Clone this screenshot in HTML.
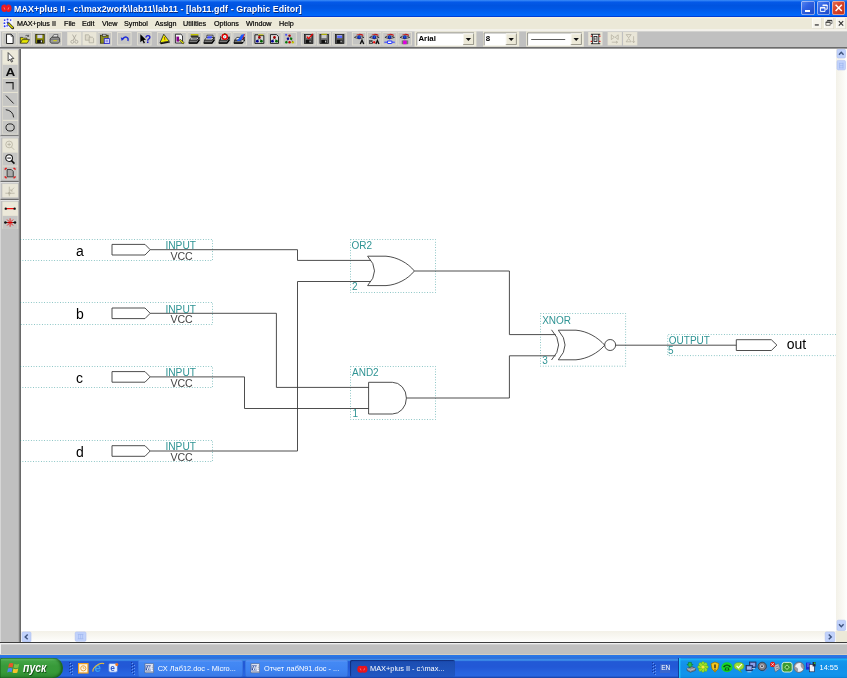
<!DOCTYPE html>
<html lang="en">
<head>
<meta charset="utf-8">
<title>MAX+plus II - Graphic Editor</title>
<style>
html,body{margin:0;padding:0;}
body{width:847px;height:678px;overflow:hidden;position:relative;background:#fff;font-family:"Liberation Sans",sans-serif;}
.abs{position:absolute;}
#title{left:0;top:0;width:847px;height:17px;background:linear-gradient(to bottom,#3f8ff8 0%,#1a6ef0 7%,#0459e8 14%,#0054e0 32%,#0057e5 50%,#0062f3 75%,#0068fb 91%,#0046dc 95.5%,#002fc4 100%);}
#title .txt{left:14px;top:3px;color:#fff;font-weight:bold;font-size:8.85px;line-height:12px;white-space:nowrap;text-shadow:0.6px 0.6px 0 #0a2a80;letter-spacing:0.08px;}
#menu{left:0;top:17px;width:847px;height:13px;background:linear-gradient(to bottom,#f7f1df 0,#f7f1df 1px,#ece9d8 1.8px,#ece9d8 11.6px,#f3f1e8 12.4px,#f4f3ee 13px);}
#menu span{position:absolute;top:1.5px;font-size:7.2px;line-height:10px;color:#000;white-space:nowrap;-webkit-text-stroke:0.2px #000;}
#tool{left:0;top:30px;width:847px;height:19px;background:#c0c0c0;}
#left{left:0;top:49px;width:21px;height:593px;background:#c0c0c0;}
#canvas{left:21px;top:49px;width:815px;height:582px;background:#fff;}
#vscroll{left:836px;top:49px;width:11px;height:582px;background:linear-gradient(to right,#f3f1e8,#fefefc);}
#hscroll{left:21px;top:631px;width:815px;height:11px;background:linear-gradient(to bottom,#f3f1e8,#fefefc);}
#corner{left:836px;top:631px;width:11px;height:11px;background:#ece9d8;}
#status{left:0;top:642px;width:847px;height:13px;background:#c0c0c0;}
#task{left:0;top:655px;width:847px;height:23px;background:linear-gradient(to bottom,#2a78e6 0px,#2a74e4 2px,#2f6cd6 3.2px,#3f8ee8 4.6px,#3a88e6 5.4px,#2259d6 6.6px,#2258d6 12px,#2764e0 18px,#2866e2 21px,#1f4fbe 22px,#193fa0 23px);}
.tb{position:absolute;top:2px;width:14.4px;height:13.4px;background:#c5c5c3;box-shadow:inset 0 0 0 0.8px #e6e3d5;}
.tb.dis{background:#e9e6d8;}
.combo{position:absolute;top:2.6px;height:12.4px;background:#fff;box-shadow:0 0 0 0.6px #8a98b0;}
.ctxt{position:absolute;left:2.2px;top:1.2px;font-size:8px;line-height:10px;font-weight:bold;color:#000;}
.cbtn{position:absolute;right:0.4px;top:0.6px;width:10.6px;height:11.2px;background:#ece9d8;box-shadow:inset 0.6px 0.6px 0 #fff,inset -0.7px -0.7px 0 #8a8878;}
.lb{position:absolute;left:3px;width:15px;height:14px;background:#c6c6c2;box-shadow:inset 0.5px 0.5px 0 #e8e5d8,inset -0.5px -0.5px 0 #dcd8c8;}
.sbtn{position:absolute;background:#c1d2fb;border-radius:1.5px;box-shadow:inset 0 0 0 0.5px #b0c4f4;}
svg{position:absolute;overflow:visible;}
</style>
</head>
<body>
<div id="root" style="position:absolute;left:0;top:0;width:847px;height:678px;will-change:transform">
<!-- TITLE BAR -->
<div id="title" class="abs">
  <div class="abs txt">MAX+plus II - c:\max2work\lab11\lab11 - [lab11.gdf - Graphic Editor]</div>
</div>
<!-- MENU BAR -->
<div id="menu" class="abs">
  <span style="left:17px">MAX+plus II</span>
  <span style="left:64px">File</span>
  <span style="left:82px">Edit</span>
  <span style="left:102px">View</span>
  <span style="left:124px">Symbol</span>
  <span style="left:155px">Assign</span>
  <span style="left:183px">Utilities</span>
  <span style="left:214px">Options</span>
  <span style="left:246px">Window</span>
  <span style="left:279px">Help</span>
</div>
<!-- TOOLBAR -->
<div id="tool" class="abs">
<div class="abs" style="left:0;top:0;width:847px;height:1px;background:#f4f3ee"></div>
<div class="abs" style="left:0;top:17px;width:847px;height:1px;background:#6c6c6c"></div>
<div class="abs" style="left:0;top:18px;width:847px;height:1px;background:#9c9c9c"></div>
<svg style="left:0;top:0" width="847" height="19" viewBox="0 30 847 19">
<rect x="0" y="30.9" width="847" height="0.6" fill="#e4e3de"/>
<rect x="0" y="31.3" width="0.9" height="15.7" fill="#e6e6e6"/>
<rect x="414.6" y="31.2" width="61.8" height="15.4" fill="#ece9d8"/>
<rect x="483.0" y="31.2" width="36.2" height="15.4" fill="#ece9d8"/>
<rect x="526.2" y="31.2" width="57.6" height="15.4" fill="#ece9d8"/>
<rect x="2.4" y="32.0" width="14.3" height="13.4" fill="#e6e3d5"/>
<rect x="3.2" y="32.8" width="12.7" height="11.8" fill="#c5c5c3"/>
<g transform="translate(2.5,32.2) scale(1.01,1.0)"><path d="M4,2 H8.5 L10.5,4 V11.3 H4 Z" fill="#fff" stroke="#111" stroke-width=".9"/><path d="M8.5,2 V4 H10.5" fill="none" stroke="#111" stroke-width=".6"/></g>
<rect x="17.6" y="32.0" width="14.3" height="13.4" fill="#e6e3d5"/>
<rect x="18.4" y="32.8" width="12.7" height="11.8" fill="#c5c5c3"/>
<g transform="translate(17.7,32.2) scale(1.01,1.0)"><path d="M2.6,11 V5.2 H5 L5.8,6 H9.2 V7.4" fill="#d8d800" stroke="#222" stroke-width=".7"/><path d="M2.6,11 L4.6,7.4 H11.6 L9.4,11 Z" fill="#e6e600" stroke="#222" stroke-width=".7"/><path d="M7.6,3.6 Q9.4,2.2 10.6,3.8 M10.8,2.6 V4.2 H9.4" fill="none" stroke="#222" stroke-width=".6"/></g>
<rect x="32.6" y="32.0" width="14.3" height="13.4" fill="#e6e3d5"/>
<rect x="33.4" y="32.8" width="12.7" height="11.8" fill="#c5c5c3"/>
<g transform="translate(32.7,32.2) scale(1.01,1.0)"><rect x="3" y="2.2" width="8.4" height="8.8" fill="#8a8a00" stroke="#1a1a00" stroke-width=".7"/><rect x="4.6" y="2.6" width="5" height="3.4" fill="#d0d0e8"/><rect x="4.4" y="7.6" width="5.4" height="3.2" fill="#111"/><rect x="8" y="8.2" width="1.2" height="2" fill="#ddd"/></g>
<rect x="47.6" y="32.0" width="14.3" height="13.4" fill="#e6e3d5"/>
<rect x="48.4" y="32.8" width="12.7" height="11.8" fill="#c5c5c3"/>
<g transform="translate(47.7,32.2) scale(1.01,1.0)"><path d="M4.6,5 L6,2.4 H10.2 L9.6,5 Z" fill="#e8e8e8" stroke="#333" stroke-width=".6"/><path d="M2.4,6.8 L4,5 H11 L11.8,6.8 V9.6 L10.6,11 H3.6 L2.4,9.6 Z" fill="#9a9a9a" stroke="#222" stroke-width=".7"/><rect x="5.6" y="8" width="3.4" height="1" fill="#d8d800"/><path d="M2.6,7 H11.6" stroke="#444" stroke-width=".5"/></g>
<rect x="67.2" y="32.0" width="14.3" height="13.4" fill="#e6e3d5"/>
<rect x="68.0" y="32.8" width="12.7" height="11.8" fill="#e9e6d8"/>
<g transform="translate(67.3,32.2) scale(1.01,1.0)"><path d="M5.2,2.4 L8.2,8 M8.8,2.4 L5.8,8" stroke="#a8a498" stroke-width=".8" fill="none"/><circle cx="5" cy="9.6" r="1.5" fill="none" stroke="#a8a498" stroke-width=".8"/><circle cx="9" cy="9.6" r="1.5" fill="none" stroke="#a8a498" stroke-width=".8"/></g>
<rect x="82.4" y="32.0" width="14.3" height="13.4" fill="#e6e3d5"/>
<rect x="83.2" y="32.8" width="12.7" height="11.8" fill="#e9e6d8"/>
<g transform="translate(82.5,32.2) scale(1.01,1.0)"><path d="M2.8,2.6 H6 L7.2,3.8 V8 H2.8 Z" fill="#ddd9c9" stroke="#aaa698" stroke-width=".7"/><path d="M6.6,5 H9.8 L11,6.2 V10.6 H6.6 Z" fill="#e4e0d0" stroke="#aaa698" stroke-width=".7"/></g>
<rect x="97.5" y="32.0" width="14.3" height="13.4" fill="#e6e3d5"/>
<rect x="98.3" y="32.8" width="12.7" height="11.8" fill="#c5c5c3"/>
<g transform="translate(97.6,32.2) scale(1.01,1.0)"><rect x="2.8" y="3" width="7.6" height="8" fill="#8a8a20" stroke="#2a2a00" stroke-width=".7"/><rect x="4.8" y="2" width="3.6" height="2" fill="#c8c8c8" stroke="#222" stroke-width=".5"/><rect x="6.6" y="6.4" width="5" height="5" fill="#e8e8ff" stroke="#2222cc" stroke-width=".8"/><path d="M7.8,8 H10.4 M7.8,9.6 H10.4" stroke="#22c" stroke-width=".6"/></g>
<rect x="117.2" y="32.0" width="14.3" height="13.4" fill="#e6e3d5"/>
<rect x="118.0" y="32.8" width="12.7" height="11.8" fill="#c5c5c3"/>
<g transform="translate(117.3,32.2) scale(1.01,1.0)"><path d="M5.4,7.2 Q6.4,4.4 9,4.9 Q11.4,5.6 10.5,8.8" fill="none" stroke="#1a2ad8" stroke-width="1.3"/><path d="M3.4,5.2 L7,6 L4.4,8.9 Z" fill="#1a2ad8"/></g>
<rect x="137.2" y="32.0" width="14.3" height="13.4" fill="#e6e3d5"/>
<rect x="138.0" y="32.8" width="12.7" height="11.8" fill="#c5c5c3"/>
<g transform="translate(137.3,32.2) scale(1.01,1.0)"><path d="M3,2 L3,10 L5,8.2 L6.4,11.2 L7.6,10.6 L6.2,7.8 L8.6,7.6 Z" fill="#000"/><text x="7.4" y="10.6" font-size="10.4" font-weight="bold" font-family="Liberation Sans, sans-serif" fill="#1a1ad0">?</text></g>
<rect x="157.2" y="32.0" width="14.3" height="13.4" fill="#e6e3d5"/>
<rect x="158.0" y="32.8" width="12.7" height="11.8" fill="#c5c5c3"/>
<g transform="translate(157.3,32.2) scale(1.01,1.0)"><path d="M2.6,10.6 L11.8,9 L12.6,10.4 L3.6,12 Z" fill="#111"/><path d="M6.4,2 L11.8,9 L2.6,10.6 Z" fill="#f0f000" stroke="#222" stroke-width=".8"/><path d="M7,4.8 L7.6,8 M7.8,9 V9.4" stroke="#a04000" stroke-width=".9"/></g>
<rect x="172.3" y="32.0" width="14.3" height="13.4" fill="#e6e3d5"/>
<rect x="173.1" y="32.8" width="12.7" height="11.8" fill="#c5c5c3"/>
<g transform="translate(172.4,32.2) scale(1.01,1.0)"><path d="M3,2 H8.4 L10,3.6 V10.8 H3 Z" fill="#f4f4f4" stroke="#111" stroke-width=".8"/><rect x="4" y="4.4" width="2.6" height="5" fill="#8a008a"/><path d="M7.6,7 L11.6,10.4 L10.6,11.8 L6.8,8.4 Z" fill="#e0e000" stroke="#222" stroke-width=".6"/></g>
<rect x="187.4" y="32.0" width="14.3" height="13.4" fill="#e6e3d5"/>
<rect x="188.2" y="32.8" width="12.7" height="11.8" fill="#c5c5c3"/>
<g transform="translate(187.5,32.2) scale(1.01,1.0)"><path d="M2,8 L4.2,5.2 H11.6 L9.6,8 Z" fill="#ececec" stroke="#111" stroke-width=".7"/><path d="M2,8 H9.6 L11.6,5.2 V7.6 L9.4,10.8 H1.4 Z" fill="#7a7a7a" stroke="#111" stroke-width=".7"/><path d="M1.2,11 H9.4 L11.8,7.6" stroke="#000" stroke-width="1.2" fill="none"/><rect x="3.2" y="1.8" width="7.6" height="1.6" fill="#c4c400"/><rect x="3.2" y="3.4" width="7.6" height="1.2" fill="#111"/><path d="M4.6,6.6 H9.4" stroke="#555" stroke-width="1"/></g>
<rect x="202.4" y="32.0" width="14.3" height="13.4" fill="#e6e3d5"/>
<rect x="203.2" y="32.8" width="12.7" height="11.8" fill="#c5c5c3"/>
<g transform="translate(202.5,32.2) scale(1.01,1.0)"><path d="M2,8 L4.2,5.2 H11.6 L9.6,8 Z" fill="#ececec" stroke="#111" stroke-width=".7"/><path d="M2,8 H9.6 L11.6,5.2 V7.6 L9.4,10.8 H1.4 Z" fill="#7a7a7a" stroke="#111" stroke-width=".7"/><path d="M1.2,11 H9.4 L11.8,7.6" stroke="#000" stroke-width="1.2" fill="none"/><path d="M4.4,3 H10.4 V5.4 H4.4 Z" fill="#e8e8f4" stroke="#111" stroke-width=".7"/><path d="M5.2,4 H9.6 L8.8,6.4 H4.4 Z" fill="#3a4aff"/></g>
<rect x="217.4" y="32.0" width="14.3" height="13.4" fill="#e6e3d5"/>
<rect x="218.2" y="32.8" width="12.7" height="11.8" fill="#c5c5c3"/>
<g transform="translate(217.5,32.2) scale(1.01,1.0)"><path d="M2,8 L4.2,5.2 H11.6 L9.6,8 Z" fill="#ececec" stroke="#111" stroke-width=".7"/><path d="M2,8 H9.6 L11.6,5.2 V7.6 L9.4,10.8 H1.4 Z" fill="#7a7a7a" stroke="#111" stroke-width=".7"/><path d="M1.2,11 H9.4 L11.8,7.6" stroke="#000" stroke-width="1.2" fill="none"/><path d="M3,4 V8 M11.4,4 V7" stroke="#111" stroke-width=".7"/><circle cx="7.2" cy="4.6" r="2.5" fill="#fff" stroke="#e00000" stroke-width="1.5"/><path d="M6.4,1.6 H8" stroke="#0a6a0a" stroke-width=".9"/><circle cx="7.2" cy="4.6" r=".6" fill="#2a9aa0"/></g>
<rect x="232.5" y="32.0" width="14.3" height="13.4" fill="#e6e3d5"/>
<rect x="233.3" y="32.8" width="12.7" height="11.8" fill="#c5c5c3"/>
<g transform="translate(232.6,32.2) scale(1.01,1.0)"><path d="M2,8 L4.2,5.2 H11.6 L9.6,8 Z" fill="#ececec" stroke="#111" stroke-width=".7"/><path d="M2,8 H9.6 L11.6,5.2 V7.6 L9.4,10.8 H1.4 Z" fill="#7a7a7a" stroke="#111" stroke-width=".7"/><path d="M1.2,11 H9.4 L11.8,7.6" stroke="#000" stroke-width="1.2" fill="none"/><path d="M4.2,8.6 L7,5.4 L8.6,2.6 L11.8,1.8 L10,6.2 Q8,9.4 4.2,8.6 Z" fill="#1a5aff"/><path d="M11.9,2 L9.6,7.4" stroke="#c81030" stroke-width=".8"/><ellipse cx="9.8" cy="8.8" rx="1.7" ry="1" fill="#fff" stroke="#111" stroke-width=".5"/></g>
<rect x="252.2" y="32.0" width="14.3" height="13.4" fill="#e6e3d5"/>
<rect x="253.0" y="32.8" width="12.7" height="11.8" fill="#c5c5c3"/>
<g transform="translate(252.3,32.2) scale(1.01,1.0)"><path d="M2.6,2.6 H5.6 L6.4,3.4 H11.4 V11.2 H2.6 Z" fill="#d4d4d4" stroke="#111" stroke-width=".9"/><path d="M6,2.6 H11" stroke="#c8c800" stroke-width=".9"/><circle cx="7" cy="5.2" r="1.35" fill="#a80000"/><circle cx="5" cy="9" r="1.35" fill="#000098"/><circle cx="9" cy="9" r="1.35" fill="#006800"/><path d="M7,6 L5,8.4 M7,6 L9,8.4" stroke="#222" stroke-width=".5"/></g>
<rect x="267.3" y="32.0" width="14.3" height="13.4" fill="#e6e3d5"/>
<rect x="268.1" y="32.8" width="12.7" height="11.8" fill="#c5c5c3"/>
<g transform="translate(267.4,32.2) scale(1.01,1.0)"><path d="M3,2.4 H9 L11,4.4 V11.2 H3 Z" fill="#dcdcdc" stroke="#111" stroke-width=".9"/><circle cx="7" cy="5.2" r="1.35" fill="#a80000"/><circle cx="5" cy="9" r="1.35" fill="#000098"/><circle cx="9" cy="9" r="1.35" fill="#006800"/><path d="M7,6 L5,8.4 M7,6 L9,8.4" stroke="#222" stroke-width=".5"/></g>
<rect x="282.4" y="32.0" width="14.3" height="13.4" fill="#e6e3d5"/>
<rect x="283.2" y="32.8" width="12.7" height="11.8" fill="#c5c5c3"/>
<g transform="translate(282.5,32.2) scale(1.01,1.0)"><circle cx="7" cy="3.4" r="1.2" fill="#c00000"/><circle cx="5.4" cy="6.6" r="1.2" fill="#0000b0"/><circle cx="8.6" cy="6.6" r="1.2" fill="#008000"/><circle cx="3.8" cy="10" r="1.2" fill="#008000"/><circle cx="7" cy="10" r="1.2" fill="#c00000"/><circle cx="10.2" cy="10" r="1.2" fill="#c8c800"/><path d="M7,3.4 L3.8,10 M7,3.4 L10.2,10" stroke="#333" stroke-width=".4"/><path d="M3.6,1.6 V3.6 M2.6,2.6 H4.6" stroke="#22f" stroke-width=".7"/></g>
<rect x="301.3" y="32.0" width="14.3" height="13.4" fill="#e6e3d5"/>
<rect x="302.1" y="32.8" width="12.7" height="11.8" fill="#c5c5c3"/>
<g transform="translate(301.4,32.2) scale(1.01,1.0)"><rect x="3" y="2.4" width="8.4" height="8.8" fill="#555" stroke="#111" stroke-width=".7"/><rect x="4.6" y="2.8" width="5" height="3.2" fill="#c8c8c8"/><rect x="4.4" y="7.8" width="5.4" height="3.2" fill="#111"/><rect x="8" y="8.4" width="1.2" height="1.8" fill="#ccc"/><path d="M5.4,4.4 L7.2,6.4 L11.2,1.6" fill="none" stroke="#f00000" stroke-width="1.3"/></g>
<rect x="316.8" y="32.0" width="14.3" height="13.4" fill="#e6e3d5"/>
<rect x="317.6" y="32.8" width="12.7" height="11.8" fill="#c5c5c3"/>
<g transform="translate(316.9,32.2) scale(1.01,1.0)"><rect x="3" y="2.4" width="8.4" height="8.8" fill="#6a6a6a" stroke="#111" stroke-width=".7"/><rect x="4.6" y="2.8" width="5" height="3.2" fill="#c8c8c8"/><rect x="4.4" y="7.8" width="5.4" height="3.2" fill="#111"/><rect x="8" y="8.4" width="1.2" height="1.8" fill="#ccc"/><rect x="4.4" y="1.6" width="5.6" height="1" fill="#c8c800"/></g>
<rect x="332.3" y="32.0" width="14.3" height="13.4" fill="#e6e3d5"/>
<rect x="333.1" y="32.8" width="12.7" height="11.8" fill="#c5c5c3"/>
<g transform="translate(332.4,32.2) scale(1.01,1.0)"><rect x="3" y="2.4" width="8.4" height="8.8" fill="#505050" stroke="#111" stroke-width=".7"/><rect x="4.6" y="2.8" width="5" height="3.2" fill="#c8c8c8"/><rect x="4.4" y="7.8" width="5.4" height="3.2" fill="#111"/><rect x="8" y="8.4" width="1.2" height="1.8" fill="#ccc"/><rect x="4.8" y="3.4" width="4.8" height="2.4" fill="#5a6aff"/></g>
<rect x="351.9" y="32.0" width="14.3" height="13.4" fill="#e6e3d5"/>
<rect x="352.7" y="32.8" width="12.7" height="11.8" fill="#c5c5c3"/>
<g transform="translate(352.0,32.2) scale(1.01,1.0)"><path d="M3.6,3 Q7.4,0.2 11.2,2.6 L11,3.8 Q7.4,1.6 3.6,3 Z" fill="#c41414"/><path d="M2.4,5.2 Q7,2 11.8,5.2 Q7,8 2.4,5.2 Z" fill="#dcdcdc" stroke="#111" stroke-width=".7"/><circle cx="7" cy="5" r="1.75" fill="#0a1cae"/><circle cx="7.1" cy="4.9" r=".75" fill="#2a78ff"/><path d="M8.2,11.8 L9.9,8 L11.6,11.8" fill="none" stroke="#111" stroke-width="1.35"/></g>
<rect x="367.1" y="32.0" width="14.3" height="13.4" fill="#e6e3d5"/>
<rect x="367.9" y="32.8" width="12.7" height="11.8" fill="#c5c5c3"/>
<g transform="translate(367.2,32.2) scale(1.01,1.0)"><path d="M3.6,3 Q7.4,0.2 11.2,2.6 L11,3.8 Q7.4,1.6 3.6,3 Z" fill="#c41414"/><path d="M2.4,5.2 Q7,2 11.8,5.2 Q7,8 2.4,5.2 Z" fill="#dcdcdc" stroke="#111" stroke-width=".7"/><circle cx="7" cy="5" r="1.75" fill="#0a1cae"/><circle cx="7.1" cy="4.9" r=".75" fill="#2a78ff"/><text x="1.8" y="12" font-size="5.6" font-weight="bold" font-family="Liberation Sans, sans-serif" fill="#111">B</text><path d="M5.6,10 H8.2 M6.9,8.7 V11.3" stroke="#f00000" stroke-width="1.1"/><path d="M8.6,11.8 L10.1,8.2 L11.6,11.8" fill="none" stroke="#111" stroke-width="1.3"/></g>
<rect x="382.4" y="32.0" width="14.3" height="13.4" fill="#e6e3d5"/>
<rect x="383.2" y="32.8" width="12.7" height="11.8" fill="#c5c5c3"/>
<g transform="translate(382.5,32.2) scale(1.01,1.0)"><path d="M3.6,3 Q7.4,0.2 11.2,2.6 L11,3.8 Q7.4,1.6 3.6,3 Z" fill="#c41414"/><path d="M2.4,5.2 Q7,2 11.8,5.2 Q7,8 2.4,5.2 Z" fill="#dcdcdc" stroke="#111" stroke-width=".7"/><circle cx="7" cy="5" r="1.75" fill="#0a1cae"/><circle cx="7.1" cy="4.9" r=".75" fill="#2a78ff"/><path d="M1.8,10 H12.2" stroke="#3a4aff" stroke-width="1.1"/><rect x="4.8" y="8.7" width="4.6" height="2.6" rx=".9" fill="#fff" stroke="#2a3aff" stroke-width="1"/></g>
<rect x="397.6" y="32.0" width="14.3" height="13.4" fill="#e6e3d5"/>
<rect x="398.4" y="32.8" width="12.7" height="11.8" fill="#c5c5c3"/>
<g transform="translate(397.7,32.2) scale(1.01,1.0)"><path d="M3.6,3 Q7.4,0.2 11.2,2.6 L11,3.8 Q7.4,1.6 3.6,3 Z" fill="#c41414"/><path d="M2.4,5.2 Q7,2 11.8,5.2 Q7,8 2.4,5.2 Z" fill="#dcdcdc" stroke="#111" stroke-width=".7"/><circle cx="7" cy="5" r="1.75" fill="#0a1cae"/><circle cx="7.1" cy="4.9" r=".75" fill="#2a78ff"/><rect x="4" y="8.2" width="6.4" height="3.8" fill="#777"/><rect x="5.4" y="8.4" width="3.4" height="3.6" fill="#e000e0"/></g>
<rect x="588.2" y="32.0" width="14.3" height="13.4" fill="#e6e3d5"/>
<rect x="589.0" y="32.8" width="12.7" height="11.8" fill="#e9e6d8"/>
<g transform="translate(588.3,32.2) scale(1.01,1.0)"><rect x="4" y="2" width="6.4" height="9.6" fill="#f4f4f4" stroke="#111" stroke-width=".8"/><rect x="5.6" y="4.2" width="3" height="5" fill="#ddd" stroke="#111" stroke-width=".8"/><path d="M5.6,6.8 L7,6 V7.6 Z" fill="#111"/><g fill="#e00000"><rect x="2.4" y="3.4" width="1.2" height="1.2"/><rect x="2.4" y="8.6" width="1.2" height="1.2"/><rect x="10.8" y="3.4" width="1.2" height="1.2"/><rect x="10.8" y="8.6" width="1.2" height="1.2"/></g><g fill="#111"><rect x="2.6" y="1.6" width="1" height="1"/><rect x="10.8" y="1.6" width="1" height="1"/><rect x="2.6" y="11" width="1" height="1"/><rect x="10.8" y="11" width="1" height="1"/></g></g>
<rect x="607.6" y="32.0" width="14.3" height="13.4" fill="#e6e3d5"/>
<rect x="608.4" y="32.8" width="12.7" height="11.8" fill="#e9e6d8"/>
<g transform="translate(607.7,32.2) scale(1.01,1.0)"><path d="M3.6,2.6 L6.6,5 L3.6,7.4 Z M10.4,2.6 L7.4,5 L10.4,7.4 Z" fill="none" stroke="#b0ac9c" stroke-width=".7"/><path d="M4,10 H9.6 M8.2,8.8 L9.8,10 L8.2,11.2" fill="none" stroke="#b0ac9c" stroke-width=".7"/></g>
<rect x="623.0" y="32.0" width="14.3" height="13.4" fill="#e6e3d5"/>
<rect x="623.8" y="32.8" width="12.7" height="11.8" fill="#e9e6d8"/>
<g transform="translate(623.1,32.2) scale(1.01,1.0)"><path d="M3,2.4 H8 L5.5,5.6 Z M3,9.6 H8 L5.5,6.4 Z" fill="none" stroke="#b0ac9c" stroke-width=".7"/><path d="M10.4,4 V10.4 M9.2,9 L10.4,10.6 L11.6,9" fill="none" stroke="#b0ac9c" stroke-width=".7"/></g>
<rect x="416.8" y="32.9" width="57.2" height="12.6" fill="#fff"/><path d="M416.8,45.5 V32.9 H474.0" fill="none" stroke="#7c7c78" stroke-width=".8"/><path d="M417.2,45.5 H474.0 V33.3" fill="none" stroke="#f6f5ee" stroke-width=".8"/><text x="418.40000000000003" y="40.9" font-size="7.9" font-weight="bold" font-family="Liberation Sans, sans-serif" fill="#000">Arial</text><rect x="463.0" y="33.6" width="10.6" height="11.2" fill="#ece9d8"/><path d="M463.0,44.6 H473.6 V33.6" fill="none" stroke="#7e7c6e" stroke-width=".8"/><path d="M463.3,44.3 V33.9 H473.2" fill="none" stroke="#fff" stroke-width=".7"/><path d="M465.7,37.9 h5.4 l-2.7,3 Z" fill="#111"/>
<rect x="484.2" y="32.9" width="32.6" height="12.6" fill="#fff"/><path d="M484.2,45.5 V32.9 H516.8" fill="none" stroke="#7c7c78" stroke-width=".8"/><path d="M484.59999999999997,45.5 H516.8 V33.3" fill="none" stroke="#f6f5ee" stroke-width=".8"/><text x="485.8" y="40.9" font-size="7.9" font-weight="bold" font-family="Liberation Sans, sans-serif" fill="#000">8</text><rect x="505.79999999999995" y="33.6" width="10.6" height="11.2" fill="#ece9d8"/><path d="M505.79999999999995,44.6 H516.4 V33.6" fill="none" stroke="#7e7c6e" stroke-width=".8"/><path d="M506.09999999999997,44.3 V33.9 H516.0" fill="none" stroke="#fff" stroke-width=".7"/><path d="M508.49999999999994,37.9 h5.4 l-2.7,3 Z" fill="#111"/>
<rect x="527.6" y="32.9" width="54.2" height="12.6" fill="#fff"/><path d="M527.6,45.5 V32.9 H581.8000000000001" fill="none" stroke="#7c7c78" stroke-width=".8"/><path d="M528.0,45.5 H581.8000000000001 V33.3" fill="none" stroke="#f6f5ee" stroke-width=".8"/><path d="M531.2,39.5 H565.2" stroke="#333" stroke-width=".8"/><rect x="570.8000000000001" y="33.6" width="10.6" height="11.2" fill="#ece9d8"/><path d="M570.8000000000001,44.6 H581.4000000000001 V33.6" fill="none" stroke="#7e7c6e" stroke-width=".8"/><path d="M571.1,44.3 V33.9 H581.0000000000001" fill="none" stroke="#fff" stroke-width=".7"/><path d="M573.5000000000001,37.9 h5.4 l-2.7,3 Z" fill="#111"/>
</svg>
</div>
<!-- LEFT PALETTE -->
<div id="left" class="abs">
<svg style="left:0;top:0" width="21" height="593" viewBox="0 49 21 593">
<rect x="18.6" y="49" width="2.4" height="593" fill="url(#lgEdge)"/>
<defs><linearGradient id="lgEdge" x1="0" x2="1" y1="0" y2="0"><stop offset="0" stop-color="#a0a0a0"/><stop offset="1" stop-color="#5a5a5a"/></linearGradient></defs>
<rect x="0" y="49" width="18.6" height="0.9" fill="#dedede"/>
<rect x="0" y="49" width="0.9" height="593" fill="#d8d8d8"/>
<rect x="2.3" y="50.0" width="15.8" height="84.4" fill="#e6e3d4"/>
<rect x="2.3" y="138.4" width="15.8" height="40.9" fill="#e6e3d4"/>
<rect x="2.3" y="183.8" width="15.8" height="13.4" fill="#e6e3d4"/>
<rect x="2.3" y="201.6" width="15.8" height="27.2" fill="#e6e3d4"/>
<rect x="0.5" y="135.2" width="18.2" height="1.2" fill="#6e6e6e"/>
<rect x="0.5" y="136.4" width="18.2" height="1" fill="#e4e4e4"/>
<rect x="0.5" y="180.9" width="18.2" height="1.2" fill="#6e6e6e"/>
<rect x="0.5" y="182.1" width="18.2" height="1" fill="#e4e4e4"/>
<rect x="0.5" y="198.8" width="18.2" height="1.2" fill="#6e6e6e"/>
<rect x="0.5" y="200.0" width="18.2" height="1" fill="#e4e4e4"/>
<rect x="2.8" y="50.6" width="14.8" height="12.9" fill="#ece9da"/>
<g transform="translate(2.8,50.6) scale(0.9867,0.992)"><path d="M5.4,2 V10.4 L7.4,8.6 L8.8,11.6 L10,11 L8.6,8.2 L11.2,8 Z" fill="#fff" stroke="#222" stroke-width=".8"/></g>
<rect x="2.8" y="64.9" width="14.8" height="12.9" fill="#c6c6c4"/>
<g transform="translate(2.8,64.9) scale(0.9867,0.992)"><text x="2.7" y="11.4" font-size="11" font-weight="bold" font-family="Liberation Sans, sans-serif" fill="#111" textLength="9.9" lengthAdjust="spacingAndGlyphs">A</text></g>
<rect x="2.8" y="79.0" width="14.8" height="12.9" fill="#c6c6c4"/>
<g transform="translate(2.8,79.0) scale(0.9867,0.992)"><path d="M3,3.6 H10.4 V10.6" fill="none" stroke="#222" stroke-width="1.2"/></g>
<rect x="2.8" y="93.0" width="14.8" height="12.9" fill="#c6c6c4"/>
<g transform="translate(2.8,93.0) scale(0.9867,0.992)"><path d="M3.2,2.6 L11,10.6" fill="none" stroke="#222" stroke-width="1"/></g>
<rect x="2.8" y="106.9" width="14.8" height="12.9" fill="#c6c6c4"/>
<g transform="translate(2.8,106.9) scale(0.9867,0.992)"><path d="M3,2.8 Q10.2,3.6 11,10.6" fill="none" stroke="#222" stroke-width="1"/></g>
<rect x="2.8" y="120.9" width="14.8" height="12.9" fill="#c6c6c4"/>
<g transform="translate(2.8,120.9) scale(0.9867,0.992)"><ellipse cx="7.4" cy="6.6" rx="4.2" ry="3.6" fill="none" stroke="#222" stroke-width="1"/></g>
<rect x="2.8" y="138.9" width="14.8" height="12.9" fill="#e9e6d8"/>
<g transform="translate(2.8,138.9) scale(0.9867,0.992)"><circle cx="6.4" cy="5.6" r="3.4" fill="none" stroke="#b4b0a0" stroke-width=".8"/><path d="M6.4,3.8 V7.4 M4.6,5.6 H8.2 M8.8,8.2 L11.6,11" stroke="#b4b0a0" stroke-width=".8"/></g>
<rect x="2.8" y="152.7" width="14.8" height="12.9" fill="#c6c6c4"/>
<g transform="translate(2.8,152.7) scale(0.9867,0.992)"><circle cx="6.4" cy="5.4" r="3.4" fill="#fff" stroke="#111" stroke-width="1.1"/><path d="M4.6,5.4 H8.2" stroke="#111" stroke-width="1"/><path d="M8.8,8 L11.8,11" stroke="#111" stroke-width="1.6"/></g>
<rect x="2.8" y="166.5" width="14.8" height="12.9" fill="#c6c6c4"/>
<g transform="translate(2.8,166.5) scale(0.9867,0.992)"><path d="M4.4,3 H8.6 L10.6,5 V10.4 H4.4 Z" fill="#aaa" stroke="#222" stroke-width=".8"/><g stroke="#e00000" stroke-width="1" fill="none"><path d="M2.4,3.6 V1.8 H4.2 M10.6,1.8 H12.4 V3.6 M12.4,9.6 V11.4 H10.6 M4.2,11.4 H2.4 V9.6"/></g></g>
<rect x="2.8" y="184.3" width="14.8" height="12.9" fill="#e9e6d8"/>
<g transform="translate(2.8,184.3) scale(0.9867,0.992)"><path d="M2.6,9 H12 M6.6,2.4 V12" stroke="#b4b0a0" stroke-width=".8"/><path d="M11.4,3.4 L8.2,6.8 M8.2,4.8 V6.8 H10.2" fill="none" stroke="#b4b0a0" stroke-width=".7"/><circle cx="6.6" cy="9" r="1.2" fill="#b4b0a0"/></g>
<rect x="2.8" y="202.1" width="14.8" height="12.9" fill="#ece9da"/>
<g transform="translate(2.8,202.1) scale(0.9867,0.992)"><path d="M3.4,6.6 H11.6" stroke="#f00000" stroke-width="1.2"/><circle cx="3" cy="6.6" r="1.2" fill="#111"/><circle cx="12" cy="6.6" r="1.2" fill="#111"/></g>
<rect x="2.8" y="216.0" width="14.8" height="12.9" fill="#c6c6c4"/>
<g transform="translate(2.8,216.0) scale(0.9867,0.992)"><path d="M2,6.6 H13" stroke="#111" stroke-width="1"/><circle cx="2.6" cy="6.6" r="1.2" fill="#111"/><circle cx="12.4" cy="6.6" r="1.2" fill="#111"/><path d="M7.4,2.4 V10.8 M4.4,3.6 L10.4,9.6 M10.4,3.6 L4.4,9.6 M4.4,6.6 H10.4" stroke="#f00000" stroke-width=".8"/></g>
</svg>
</div>
<!-- CANVAS -->
<div id="canvas" class="abs"></div>
<svg id="schem" style="left:0;top:0" width="847" height="678" viewBox="0 0 847 678">
<g fill="none" stroke="#008080" stroke-opacity="0.52" stroke-width="1" stroke-dasharray="0.85 1.797">
<path d="M20.35,239.5 H212.5 V260.5 H20.35"/>
<path d="M20.35,302.5 H212.5 V324.5 H20.35"/>
<path d="M20.35,366.5 H212.5 V387.5 H20.35"/>
<path d="M20.35,440.5 H212.5 V461.5 H20.35"/>
<path d="M350.5,239.5 H435.5 V292.5 H350.5 Z"/>
<path d="M350.5,366.5 H435.5 V419.5 H350.5 Z"/>
<path d="M540.5,313.5 H625.6 V366.2 H540.5 Z"/>
<path d="M836,334.5 H667.7 V355.6 H836"/>
</g>
<g fill="none" stroke="#3e3e3e" stroke-width="0.92" stroke-linejoin="miter">
<path d="M112,244.4 H145 L150.2,249.7 L145,255.0 H112 Z"/>
<path d="M112,308.0 H145 L150.2,313.3 L145,318.6 H112 Z"/>
<path d="M112,371.6 H145 L150.2,376.9 L145,382.2 H112 Z"/>
<path d="M112,445.7 H145 L150.2,451.0 L145,456.3 H112 Z"/>
<path d="M150.2,249.7 H297.5 V260.4 H371"/>
<path d="M150.2,451 H297.5 V281.5 H371"/>
<path d="M150.2,313.3 H276.4 V387.4 H368.7"/>
<path d="M150.2,376.9 H244.5 V408.5 H368.7"/>
<path d="M414.4,271 H509.4 V334.6 H555.6"/>
<path d="M406.4,398 H509.4 V355.8 H555.6"/>
<path d="M615.7,345.2 H736.3"/>
<path d="M367.6,256.2 H386 C397,257 408,263 414.4,271 C408,279 397,285 386,285.6 H367.6 Q381.4,270.9 367.6,256.2 Z"/>
<path d="M368.6,382.3 H392.3 A14.1,15.85 0 0 1 392.3,414 H368.6 Z"/>
<path d="M551.5,329.8 Q565.7,345 551.5,360"/>
<path d="M558.3,330.2 H576 C587,331 598,337.4 604.7,345.2 C598,353 587,359 576,359.8 H558.3 Q571.8,345 558.3,330.2 Z"/>
<circle cx="610.15" cy="345" r="5.5"/>
<path d="M736.3,339.7 H771.3 L776.9,345.1 L771.3,350.5 H736.3 Z"/>
</g>
<g font-family="Liberation Sans, sans-serif" font-size="10px" fill="#2f9494">
<text x="165.4" y="249.0" font-size="10.9px" textLength="30.6" lengthAdjust="spacingAndGlyphs">INPUT</text>
<text x="165.4" y="312.6" font-size="10.9px" textLength="30.6" lengthAdjust="spacingAndGlyphs">INPUT</text>
<text x="165.4" y="376.2" font-size="10.9px" textLength="30.6" lengthAdjust="spacingAndGlyphs">INPUT</text>
<text x="165.4" y="450.3" font-size="10.9px" textLength="30.6" lengthAdjust="spacingAndGlyphs">INPUT</text>
<text x="351.6" y="249">OR2</text>
<text x="352" y="290">2</text>
<text x="352" y="376">AND2</text>
<text x="352.6" y="416.8">1</text>
<text x="542.2" y="324">XNOR</text>
<text x="542.2" y="363.6">3</text>
<text x="668.8" y="344.1">OUTPUT</text>
<text x="668" y="353.5">5</text>
</g>
<g font-family="Liberation Sans, sans-serif" font-size="10.6px" fill="#444">
<text x="170.4" y="259.6">VCC</text>
<text x="170.4" y="323.2">VCC</text>
<text x="170.4" y="386.8">VCC</text>
<text x="170.4" y="460.9">VCC</text>
</g>
<g font-family="Liberation Sans, sans-serif" font-size="14px" fill="#000">
<text x="76" y="255.6">a</text>
<text x="76" y="319.2">b</text>
<text x="76" y="382.8">c</text>
<text x="76" y="456.9">d</text>
<text x="786.8" y="349.3">out</text>
</g>
</svg>
<div id="vscroll" class="abs"></div>
<div id="hscroll" class="abs"></div>
<div id="corner" class="abs"></div>
<div id="status" class="abs"></div>
<svg style="left:0.8px;top:3.8px" width="11" height="9" viewBox="0 0 11 9"><ellipse cx="3.4" cy="4.3" rx="3.1" ry="3.7" fill="#ec1a22"/><ellipse cx="7.4" cy="4.3" rx="3.1" ry="3.7" fill="#ec1a22"/><path d="M5.4,0.9 V2 M5.4,6.8 V7.8" stroke="#1a4fd0" stroke-width=".8"/><path d="M3,3.4 L3.8,5.6 M7.8,3.4 L7,5.6" stroke="#ff8a8a" stroke-width=".8"/></svg>
<svg style="left:2.8px;top:17.8px" width="11.4" height="11.4" viewBox="0 0 11 11"><rect x="0.4" y="0.6" width="9" height="9" fill="#f4f4ff"/><g fill="#2a3af0"><circle cx="1.6" cy="2" r=".9"/><circle cx="4.4" cy="1.4" r=".9"/><circle cx="1.4" cy="5" r=".9"/><circle cx="4.4" cy="4.2" r=".9"/><circle cx="1.6" cy="8" r=".9"/><circle cx="4" cy="7.6" r=".8"/><circle cx="7.4" cy="2" r=".8"/></g><path d="M5.4,5.6 L9.4,9.6" stroke="#222" stroke-width="2.6" stroke-linecap="round"/><path d="M5.6,5.8 L9,9.2" stroke="#d8d800" stroke-width="1.5" stroke-linecap="round"/></svg>
<div class="abs" style="left:801.3px;top:1.4px;width:13.4px;height:13.8px;border-radius:2.2px;background:linear-gradient(135deg,#5c8af0 0%,#2f62e4 40%,#1c47c4 100%);box-shadow:inset 0 0 0 0.8px rgba(255,255,255,.62)"></div>
<div class="abs" style="left:816.8px;top:1.4px;width:13.4px;height:13.8px;border-radius:2.2px;background:linear-gradient(135deg,#5c8af0 0%,#2f62e4 40%,#1c47c4 100%);box-shadow:inset 0 0 0 0.8px rgba(255,255,255,.62)"></div>
<div class="abs" style="left:832.2px;top:1.4px;width:13.3px;height:13.8px;border-radius:2.2px;background:linear-gradient(135deg,#e8775c 0%,#d9452a 40%,#c2331a 100%);box-shadow:inset 0 0 0 0.8px rgba(255,255,255,.62)"></div>
<div class="abs" style="left:804.8px;top:10.1px;width:4.8px;height:1.8px;background:#fff"></div>
<svg style="left:816.8px;top:1.4px" width="13.4" height="13.8" viewBox="0 0 13.4 13.8"><path d="M5.6,4 H10.2 V8.2 H8.6 M5.6,4.6 H10.2" fill="none" stroke="#fff" stroke-width="1"/><path d="M3.4,6.4 H8 V10.4 H3.4 Z M3.4,7 H8" fill="none" stroke="#fff" stroke-width="1"/></svg>
<svg style="left:832.2px;top:1.4px" width="13.3" height="13.8" viewBox="0 0 13.3 13.8"><path d="M3.6,3.8 L9.8,10 M9.8,3.8 L3.6,10" stroke="#fff" stroke-width="1.5"/></svg>
<div class="abs" style="left:811.8px;top:18px;width:10.2px;height:10.7px;background:#f6f4ec;box-shadow:inset -0.6px -0.6px 0 #d8d4c4,inset 0.6px 0.6px 0 #fff"></div>
<div class="abs" style="left:823.8px;top:18px;width:10px;height:10.7px;background:#f6f4ec;box-shadow:inset -0.6px -0.6px 0 #d8d4c4,inset 0.6px 0.6px 0 #fff"></div>
<div class="abs" style="left:835.9px;top:18px;width:10px;height:10.7px;background:#f6f4ec;box-shadow:inset -0.6px -0.6px 0 #d8d4c4,inset 0.6px 0.6px 0 #fff"></div>
<svg style="left:811.8px;top:18px" width="10.2" height="10.7" viewBox="0 0 10.2 10.7"><rect x="2.8" y="6.3" width="4" height="1.3" fill="#3a3a3a"/></svg>
<svg style="left:823.8px;top:18px" width="10" height="10.7" viewBox="0 0 10 10.7"><path d="M3.4,2.3 H8 V5.6 H6.4 M3.4,2.3 V3.6" fill="none" stroke="#444" stroke-width=".7"/><path d="M3.4,2.6 H8" stroke="#333" stroke-width="1"/><path d="M1.9,4 H6.2 V7.3 H1.9 Z" fill="#f6f4ec" stroke="#444" stroke-width=".7"/><path d="M1.9,4.3 H6.2" stroke="#333" stroke-width="1"/></svg>
<svg style="left:835.9px;top:18px" width="10" height="10.7" viewBox="0 0 10 10.7"><path d="M2.8,3.2 L7.2,7.6 M7.2,3.2 L2.8,7.6" stroke="#333" stroke-width="1.15"/></svg>
<svg style="left:0;top:0" width="847" height="678" viewBox="0 0 847 678"><rect x="837.0" y="49.3" width="8.5" height="8.7" rx="1.3" fill="#c1d2fb" stroke="#aebff0" stroke-width=".6"/><path d="M838.95,54.85 L841.25,52.35 L843.55,54.85" fill="none" stroke="#3f547f" stroke-width="1.45"/><rect x="837.0" y="620.2" width="8.6" height="10.3" rx="1.3" fill="#c1d2fb" stroke="#aebff0" stroke-width=".6"/><path d="M839.00,624.15 L841.30,626.65 L843.60,624.15" fill="none" stroke="#3f547f" stroke-width="1.45"/><rect x="22.0" y="631.9" width="9.0" height="10.0" rx="1.3" fill="#c1d2fb" stroke="#aebff0" stroke-width=".6"/><path d="M27.70,634.50 L25.20,636.90 L27.70,639.30" fill="none" stroke="#3f547f" stroke-width="1.45"/><rect x="825.2" y="631.9" width="9.5" height="10.0" rx="1.3" fill="#c1d2fb" stroke="#aebff0" stroke-width=".6"/><path d="M828.75,634.50 L831.25,636.90 L828.75,639.30" fill="none" stroke="#3f547f" stroke-width="1.45"/><rect x="837" y="60.4" width="8.5" height="9.5" rx="1.3" fill="#c1d2fb" stroke="#aebff0" stroke-width=".6"/><path d="M839.4,63.4 H843.2 M839.4,65.6 H843.2 M839.4,67.8 H843.2" stroke="#a4bbf4" stroke-width=".8"/><path d="M839.6,62.8 V68.4 M843,62.8 V68.4" stroke="#9cb4ee" stroke-width=".7"/><rect x="75.2" y="631.9" width="10.8" height="9.4" rx="1.3" fill="#c1d2fb" stroke="#aebff0" stroke-width=".6"/><path d="M78.6,634.4 V638.8 M80.6,634.4 V638.8 M82.6,634.4 V638.8" stroke="#a4bbf4" stroke-width=".8"/><path d="M77.8,634.4 H83.4 M77.8,638.8 H83.4" stroke="#9cb4ee" stroke-width=".7"/></svg>
<div class="abs" style="left:0;top:642px;width:847px;height:1px;background:#3c3c3c"></div>
<div class="abs" style="left:0;top:643px;width:847px;height:1px;background:#f0f0f0"></div>
<div class="abs" style="left:0;top:644px;width:847px;height:1px;background:#d0d0d0"></div>
<div class="abs" style="left:0;top:643px;width:1px;height:11px;background:#f0f0f0"></div>
<div class="abs" style="left:0;top:654px;width:847px;height:1px;background:#d6cfc0"></div>
<!-- TASKBAR -->
<div id="task" class="abs">
<div class="abs" style="left:0;top:1px;width:847px;height:22px">
<div class="abs" style="left:0;top:2px;width:63px;height:20px;border-radius:2px 9px 9px 0/2px 10px 10px 0;background:linear-gradient(to bottom,#2f8a34 0%,#5cba5c 7%,#43a446 16%,#389a3a 40%,#379a38 70%,#2f8c31 92%,#287a2a 100%);box-shadow:inset -2px 0 2.5px rgba(0,50,0,.55),inset 0.8px 0 0 rgba(30,110,30,.8)"></div>
<svg style="left:7px;top:6px" width="13" height="12" viewBox="-0.8 0 13 12"><path d="M1.2,1.8 Q3.4,0.4 5.6,1.6 L4.8,5.4 Q2.6,4.4 0.4,5.6 Z" fill="#e8562a"/><path d="M6.6,1.8 Q8.8,3 11.4,1.8 L10.6,5.6 Q8.2,6.8 5.8,5.6 Z" fill="#7ac043"/><path d="M0.2,6.6 Q2.4,5.4 4.6,6.4 L3.8,10.2 Q1.6,9.2 -0.6,10.4 Z" fill="#4a88f0"/><path d="M5.6,6.6 Q8,7.8 10.4,6.6 L9.6,10.4 Q7.2,11.6 4.8,10.4 Z" fill="#f6c42a"/></svg>
<div class="abs" style="left:22.8px;top:4.6px;color:#fff;font-weight:bold;font-style:italic;font-size:12.6px;line-height:14px;transform-origin:0 0;transform:scaleX(0.83);text-shadow:0.9px 0.9px 1px rgba(0,40,0,.75)">пуск</div>
<div class="abs" style="left:69px;top:6px;width:1px;height:1px;background:#16389a"></div><div class="abs" style="left:70px;top:7px;width:1px;height:1px;background:#6a98f0"></div><div class="abs" style="left:71px;top:7.5px;width:1px;height:1px;background:#16389a"></div><div class="abs" style="left:72px;top:8.5px;width:1px;height:1px;background:#6a98f0"></div><div class="abs" style="left:69px;top:9px;width:1px;height:1px;background:#16389a"></div><div class="abs" style="left:70px;top:10px;width:1px;height:1px;background:#6a98f0"></div><div class="abs" style="left:71px;top:10.5px;width:1px;height:1px;background:#16389a"></div><div class="abs" style="left:72px;top:11.5px;width:1px;height:1px;background:#6a98f0"></div><div class="abs" style="left:69px;top:12px;width:1px;height:1px;background:#16389a"></div><div class="abs" style="left:70px;top:13px;width:1px;height:1px;background:#6a98f0"></div><div class="abs" style="left:71px;top:13.5px;width:1px;height:1px;background:#16389a"></div><div class="abs" style="left:72px;top:14.5px;width:1px;height:1px;background:#6a98f0"></div><div class="abs" style="left:69px;top:15px;width:1px;height:1px;background:#16389a"></div><div class="abs" style="left:70px;top:16px;width:1px;height:1px;background:#6a98f0"></div><div class="abs" style="left:71px;top:16.5px;width:1px;height:1px;background:#16389a"></div><div class="abs" style="left:72px;top:17.5px;width:1px;height:1px;background:#6a98f0"></div>
<div class="abs" style="left:131px;top:6px;width:1px;height:1px;background:#16389a"></div><div class="abs" style="left:132px;top:7px;width:1px;height:1px;background:#6a98f0"></div><div class="abs" style="left:133px;top:7.5px;width:1px;height:1px;background:#16389a"></div><div class="abs" style="left:134px;top:8.5px;width:1px;height:1px;background:#6a98f0"></div><div class="abs" style="left:131px;top:9px;width:1px;height:1px;background:#16389a"></div><div class="abs" style="left:132px;top:10px;width:1px;height:1px;background:#6a98f0"></div><div class="abs" style="left:133px;top:10.5px;width:1px;height:1px;background:#16389a"></div><div class="abs" style="left:134px;top:11.5px;width:1px;height:1px;background:#6a98f0"></div><div class="abs" style="left:131px;top:12px;width:1px;height:1px;background:#16389a"></div><div class="abs" style="left:132px;top:13px;width:1px;height:1px;background:#6a98f0"></div><div class="abs" style="left:133px;top:13.5px;width:1px;height:1px;background:#16389a"></div><div class="abs" style="left:134px;top:14.5px;width:1px;height:1px;background:#6a98f0"></div><div class="abs" style="left:131px;top:15px;width:1px;height:1px;background:#16389a"></div><div class="abs" style="left:132px;top:16px;width:1px;height:1px;background:#6a98f0"></div><div class="abs" style="left:133px;top:16.5px;width:1px;height:1px;background:#16389a"></div><div class="abs" style="left:134px;top:17.5px;width:1px;height:1px;background:#6a98f0"></div>
<div class="abs" style="left:652px;top:6px;width:1px;height:1px;background:#16389a"></div><div class="abs" style="left:653px;top:7px;width:1px;height:1px;background:#6a98f0"></div><div class="abs" style="left:654px;top:7.5px;width:1px;height:1px;background:#16389a"></div><div class="abs" style="left:655px;top:8.5px;width:1px;height:1px;background:#6a98f0"></div><div class="abs" style="left:652px;top:9px;width:1px;height:1px;background:#16389a"></div><div class="abs" style="left:653px;top:10px;width:1px;height:1px;background:#6a98f0"></div><div class="abs" style="left:654px;top:10.5px;width:1px;height:1px;background:#16389a"></div><div class="abs" style="left:655px;top:11.5px;width:1px;height:1px;background:#6a98f0"></div><div class="abs" style="left:652px;top:12px;width:1px;height:1px;background:#16389a"></div><div class="abs" style="left:653px;top:13px;width:1px;height:1px;background:#6a98f0"></div><div class="abs" style="left:654px;top:13.5px;width:1px;height:1px;background:#16389a"></div><div class="abs" style="left:655px;top:14.5px;width:1px;height:1px;background:#6a98f0"></div><div class="abs" style="left:652px;top:15px;width:1px;height:1px;background:#16389a"></div><div class="abs" style="left:653px;top:16px;width:1px;height:1px;background:#6a98f0"></div><div class="abs" style="left:654px;top:16.5px;width:1px;height:1px;background:#16389a"></div><div class="abs" style="left:655px;top:17.5px;width:1px;height:1px;background:#6a98f0"></div>
<svg style="left:78px;top:7.2px" width="10.6" height="10.6" viewBox="0 0 10.6 10.6"><rect x="0.6" y="0.6" width="9.4" height="9.4" fill="#fdf3e0" stroke="#f0a020" stroke-width="1.2"/><circle cx="5.3" cy="5.3" r="2.6" fill="none" stroke="#e89a28" stroke-width=".9"/><path d="M5.3,3.6 V5.3 H6.6" stroke="#e89a28" stroke-width=".7" fill="none"/></svg>
<svg style="left:92.4px;top:5.6px" width="13" height="12" viewBox="0 0 13 12"><text x="2.2" y="10.4" font-family="Liberation Sans, sans-serif" font-weight="bold" font-size="12" fill="#3aa0f0">e</text><path d="M1,9.6 Q0.2,6 6,2.6 Q11,0.2 12,2" fill="none" stroke="#f2c230" stroke-width="1.1"/></svg>
<svg style="left:108px;top:6px" width="11" height="11" viewBox="0 0 11 11"><rect x="0.8" y="1.4" width="8.6" height="8.8" rx="1.4" fill="#e8f0ff" stroke="#4a7ae0" stroke-width=".8"/><text x="2.2" y="8.8" font-family="Liberation Sans, sans-serif" font-weight="bold" font-size="8.4" fill="#2a5ad0">e</text><circle cx="8.8" cy="2.6" r="1.5" fill="#f07820"/></svg>
<div class="abs" style="left:138.4px;top:4px;width:104.2px;height:17px;border-radius:2px;background:linear-gradient(to bottom,#6aa2fb 0%,#4489f4 12%,#3f84f2 55%,#3a79e6 100%);box-shadow:inset 0 0 0 0.6px rgba(20,60,160,.3)"><svg style="left:5.4px;top:3px" width="11" height="11" viewBox="0 0 11 11"><rect x="1" y="0.8" width="8.6" height="9" fill="#f4f6ff" stroke="#5a6a8a" stroke-width=".7"/><rect x="1.6" y="2.4" width="5.2" height="5" fill="#2a4a9c"/><text x="2.2" y="6.8" font-family="Liberation Sans, sans-serif" font-weight="bold" font-size="5.4" fill="#fff">W</text><path d="M7.6,3 H9 M7.6,4.6 H9 M7.6,6.2 H9 M2,8.6 H9" stroke="#6a7a9a" stroke-width=".6"/></svg><span class="abs" style="left:19.4px;top:3.6px;font-size:7.4px;line-height:9px;color:#fff;white-space:nowrap">СХ Лаб12.doc - Micro...</span></div>
<div class="abs" style="left:244.6px;top:4px;width:103.6px;height:17px;border-radius:2px;background:linear-gradient(to bottom,#6aa2fb 0%,#4489f4 12%,#3f84f2 55%,#3a79e6 100%);box-shadow:inset 0 0 0 0.6px rgba(20,60,160,.3)"><svg style="left:5.4px;top:3px" width="11" height="11" viewBox="0 0 11 11"><rect x="1" y="0.8" width="8.6" height="9" fill="#f4f6ff" stroke="#5a6a8a" stroke-width=".7"/><rect x="1.6" y="2.4" width="5.2" height="5" fill="#2a4a9c"/><text x="2.2" y="6.8" font-family="Liberation Sans, sans-serif" font-weight="bold" font-size="5.4" fill="#fff">W</text><path d="M7.6,3 H9 M7.6,4.6 H9 M7.6,6.2 H9 M2,8.6 H9" stroke="#6a7a9a" stroke-width=".6"/></svg><span class="abs" style="left:19.4px;top:3.6px;font-size:7.4px;line-height:9px;color:#fff;white-space:nowrap">Отчет лабN91.doc - ...</span></div>
<div class="abs" style="left:349.6px;top:4px;width:105.6px;height:17px;border-radius:2px;background:linear-gradient(to bottom,#1b4cb0 0%,#1e52b9 50%,#2158c4 100%);box-shadow:inset 0.8px 0.8px 1px rgba(0,10,60,.55)"><svg style="left:7.4px;top:4.6px" width="11" height="9" viewBox="0 0 11 9"><ellipse cx="3.3" cy="4.2" rx="3" ry="3.4" fill="#e8141c"/><ellipse cx="7.5" cy="4.2" rx="3" ry="3.4" fill="#e8141c"/><rect x="3" y="1" width="5" height="6.4" fill="#e8141c"/><path d="M3.2,3.4 L4,5.4 M7.6,3.4 L6.8,5.4" stroke="#ff9a9a" stroke-width=".7"/></svg><span class="abs" style="left:20.4px;top:3.6px;font-size:7.4px;line-height:9px;color:#fff;white-space:nowrap">MAX+plus II - c:\max...</span></div>
<div class="abs" style="left:660.4px;top:7.6px;width:10px;height:9.4px;background:#3a66cc"></div>
<span class="abs" style="left:661.2px;top:8.4px;font-size:6.6px;line-height:8px;color:#fff;letter-spacing:-0.1px">EN</span>
<div class="abs" style="left:678px;top:2px;width:169px;height:20px;background:linear-gradient(to bottom,#1a86e0 0,#1cb2f6 1.4px,#1496ec 3px,#1290e8 9px,#1294ec 16px,#0f8fe6 19px,#0c78cc 20px);box-shadow:inset 1px 0 0 #0f3f9c,inset 2.4px 0 0.6px rgba(40,210,255,.75)"></div>
<svg style="left:685.4px;top:5px" width="12" height="12" viewBox="0 0 12 12"><path d="M2,7.4 L7,5.6 L10.4,7.4 L10.4,9.4 L5.4,11.2 L2,9.4 Z" fill="#8a8f98" stroke="#3a3f48" stroke-width=".6"/><path d="M2,7.4 L5.4,9.2 L10.4,7.4" fill="none" stroke="#d8dce4" stroke-width=".6"/><path d="M3.4,1.4 H6.4 V3.4 H8 L5,6.6 L2,3.4 H3.4 Z" fill="#2cc040" stroke="#0a6a1a" stroke-width=".5"/></svg>
<svg style="left:696.6px;top:5px" width="12" height="12" viewBox="0 0 12 12"><ellipse cx="6" cy="2.9" rx="1.7" ry="2.4" fill="#9be02c" stroke="#4a9a10" stroke-width=".35" transform="rotate(0 6 6)"/><ellipse cx="6" cy="2.9" rx="1.7" ry="2.4" fill="#9be02c" stroke="#4a9a10" stroke-width=".35" transform="rotate(45 6 6)"/><ellipse cx="6" cy="2.9" rx="1.7" ry="2.4" fill="#9be02c" stroke="#4a9a10" stroke-width=".35" transform="rotate(90 6 6)"/><ellipse cx="6" cy="2.9" rx="1.7" ry="2.4" fill="#9be02c" stroke="#4a9a10" stroke-width=".35" transform="rotate(135 6 6)"/><ellipse cx="6" cy="2.9" rx="1.7" ry="2.4" fill="#9be02c" stroke="#4a9a10" stroke-width=".35" transform="rotate(180 6 6)"/><ellipse cx="6" cy="2.9" rx="1.7" ry="2.4" fill="#9be02c" stroke="#4a9a10" stroke-width=".35" transform="rotate(225 6 6)"/><ellipse cx="6" cy="2.9" rx="1.7" ry="2.4" fill="#9be02c" stroke="#4a9a10" stroke-width=".35" transform="rotate(270 6 6)"/><ellipse cx="6" cy="2.9" rx="1.7" ry="2.4" fill="#9be02c" stroke="#4a9a10" stroke-width=".35" transform="rotate(315 6 6)"/><circle cx="6" cy="6" r="1.6" fill="#f8e840"/></svg>
<svg style="left:708.8px;top:5px" width="12" height="12" viewBox="0 0 12 12"><path d="M6,1 L10,2.6 Q10,8.6 6,11.2 Q2,8.6 2,2.6 Z" fill="#f4c61c" stroke="#8a6a00" stroke-width=".7"/><path d="M6,3.4 V7.2 M6,8.4 V9.4" stroke="#222" stroke-width="1.3"/></svg>
<svg style="left:721.2px;top:5px" width="12" height="12" viewBox="0 0 12 12"><ellipse cx="6" cy="6.2" rx="5.6" ry="5" fill="#18d428"/><path d="M2,5.4 Q6,1.6 10,5.4 L9,6.6 L7.6,5.6 V4.8 H4.4 V5.6 L3,6.6 Z" fill="#0a4a10"/><path d="M3.4,9.6 L4.4,6.6 H7.6 L8.6,9.6 Z" fill="#0a5a14"/><circle cx="6" cy="8" r="1" fill="#18d428"/></svg>
<svg style="left:733.2px;top:5px" width="12" height="12" viewBox="0 0 12 12"><path d="M1,5 Q1,1.4 6,1.4 Q11,1.4 11,5 Q11,8.6 7,8.8 L8.6,11.4 L4.4,8.6 Q1,8 1,5 Z" fill="#9cdc34" stroke="#5aa010" stroke-width=".5"/><path d="M3.6,4.8 L5.4,6.8 L8.8,3.2" fill="none" stroke="#fff" stroke-width="1.2"/></svg>
<svg style="left:744.8px;top:5px" width="12" height="12" viewBox="0 0 12 12"><rect x="4.6" y="1" width="6.4" height="5.2" fill="#5a6ab0" stroke="#1a2250" stroke-width=".7"/><rect x="5.6" y="2" width="4.4" height="3.2" fill="#8aa0e8"/><rect x="1" y="4.4" width="6.4" height="5.2" fill="#4a5aa0" stroke="#1a2250" stroke-width=".7"/><rect x="2" y="5.4" width="4.4" height="3.2" fill="#9ab0f0"/><path d="M2.4,10.8 H6.4 M7,7.6 H10" stroke="#c8d0e8" stroke-width=".9"/></svg>
<svg style="left:756.8px;top:5px" width="12" height="12" viewBox="0 0 12 12"><circle cx="5.2" cy="5.4" r="4.2" fill="#7a7a82" stroke="#2a2a32" stroke-width=".7"/><circle cx="5" cy="5.2" r="2" fill="#c8c8d0"/><circle cx="5" cy="5.2" r=".9" fill="#3a3a42"/><path d="M7,10.8 L11,6.6" stroke="#6a78c0" stroke-width="1"/></svg>
<svg style="left:768.8px;top:5px" width="12" height="12" viewBox="0 0 12 12"><path d="M4.4,4.4 L9.6,2.6 L11.2,7.6 L6.4,11 Z" fill="#c0c0c8" stroke="#5a5a64" stroke-width=".6"/><path d="M6.4,6 L9.4,5 M7,8 L10,7" stroke="#6a6a74" stroke-width=".7"/><circle cx="3.6" cy="3.4" r="2.6" fill="#e01818"/><path d="M2.4,2.2 L4.8,4.6 M4.8,2.2 L2.4,4.6" stroke="#fff" stroke-width=".8"/></svg>
<svg style="left:780.6px;top:5px" width="12" height="12" viewBox="0 0 12 12"><rect x="1" y="1.4" width="10.2" height="9.6" rx="2.4" fill="#3a9a30" stroke="#d8f0d0" stroke-width="1"/><path d="M6,3.4 L8.8,6.2 L6,9 L3.2,6.2 Z" fill="#a8e890"/><circle cx="6" cy="6.2" r="1.3" fill="#2a7a20"/></svg>
<svg style="left:792.8px;top:5px" width="12" height="12" viewBox="0 0 12 12"><circle cx="6" cy="6.2" r="5.2" fill="#9c9ca4" stroke="#5a5a62" stroke-width=".6"/><path d="M2,5.6 Q4,1.6 8,2.2 Q6.4,5.4 10.4,8.6 Q8,11.4 4.6,10.4 Q6.4,7.4 2,5.6 Z" fill="#f0f0f4"/></svg>
<svg style="left:804.8px;top:5px" width="12" height="12" viewBox="0 0 12 12"><rect x="1" y="1.6" width="4.6" height="7" fill="#1a2ad8"/><rect x="4.4" y="3.4" width="5" height="7.4" fill="#f0f0f8" stroke="#1a1a3a" stroke-width=".6"/><rect x="7.6" y="1" width="3" height="4.4" fill="#2a2a3a"/><path d="M2,3 H4.6 M2,5 H4.6" stroke="#9aa8ff" stroke-width=".7"/><rect x="9" y="1.4" width="1.4" height="1.6" fill="#30c030"/></svg>
<span class="abs" style="left:819.6px;top:7.4px;font-size:7.4px;line-height:9px;color:#fff">14:55</span>
</div>
</div>
</div>
</body>
</html>
